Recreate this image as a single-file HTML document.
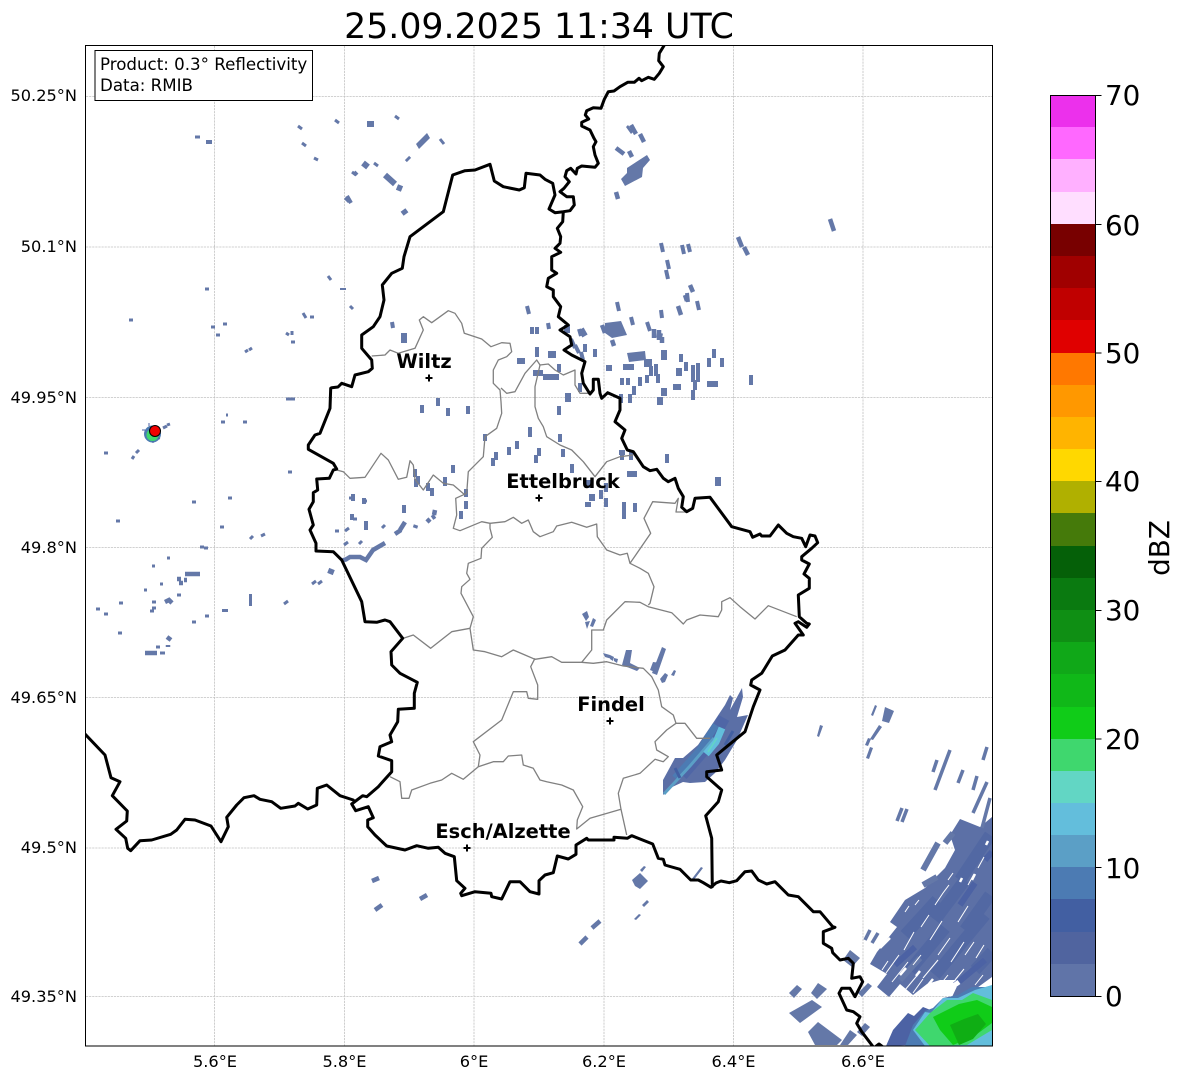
<!DOCTYPE html>
<html><head><meta charset="utf-8"><style>
html,body{margin:0;padding:0;background:#fff}
svg{display:block}
text{font-family:"DejaVu Sans","Liberation Sans",sans-serif;fill:#000}
</style></head><body>
<svg width="1184" height="1081" viewBox="0 0 1184 1081" xmlns="http://www.w3.org/2000/svg">
<text x="539" y="38" font-size="34.72" text-anchor="middle">25.09.2025 11:34 UTC</text>
<defs><clipPath id="c"><rect x="85.5" y="45.5" width="906.5" height="1000"/></clipPath></defs>
<g stroke="#c2c2c2" stroke-width="0.8" stroke-dasharray="2.2 0.9" fill="none">
<path d="M214.5 46V1046M344.5 46V1046M474 46V1046M604 46V1046M733.5 46V1046M863 46V1046M86 96.5H992M86 247H992M86 397.5H992M86 547.5H992M86 697.5H992M86 848H992M86 996.5H992"/>
</g>
<g clip-path="url(#c)">
<!-- radar small echoes -->
<g fill="none" stroke="#6478a8" stroke-linecap="butt">
<path stroke-width="3" d="M195 137h5M298 126l4 3M302 143l4 3M314 158l4 2M335 120l4 3M395 116l4 3M352 172l4 3M345 198l4 4M374 163l4 3M440 139l4 5M328 276l3 4M350 306l3 3M205 289h4M129 320h4M211 327h4M223 324h4M216 335h4M303 313l3 5M310 317h4M286 333l3 2M292 331v4M291 342h4M245 352l3-2M249 350l3-2M226 415h2M221 422h4M243 422h4M286 399h9M104 453h4M136 453l3-3M132 459l2-3M163 428l4-2M167 425l3-1M288 472h4M192 502h4M228 498h4M116 521h4M220 527h4M250 539l3-3M261 536l4-2M200 547h4M204 548h4M335 531h4M345 531l4-3M349 498h6M362 501h5M350 517h4M353 519h4M382 528l3-3M344 545l4-3M359 544l3-3M312 584l4-3M318 584l4-3M284 604l4-3M205 616h4M192 622h4M167 558h3M152 566h3M160 584h3M144 590h3M177 595h4M152 602h4M152 608h4M150 611h4M119 603h4M96 609h4M104 614h4M118 633h4M156 647h4M160 653h5"/>
<path stroke-width="4" d="M527 306l2 8M532 327v7M537 327v7M537 347v10M392 322l1 6M548 323l1 6M559 364v8M622 378v7M628 378v7M640 377v9M647 375v8M634 386v9M630 394v9M621 394v9M658 374v9M646 359v8M650 359v8M656 364v12M651 366v10M617 302l2 9M661 243l2 9M682 245l2 9M688 244l2 8M667 260l2 9M666 270l2 9M687 293l1 9M697 301l2 9M661 310l1 8M631 317l2 8M647 322l3 9M579 329l2 7M571 339l4 9M575 345l4 8M585 344v8M581 352l2 8M595 349v8M550 351v7M554 351v7M681 354v8M686 362v9M693 365v10M698 363v10M693 372v10M698 372v10M695 380v10M693 390v10M709 358v9M714 349v9M722 358v9M751 375v10M559 406v9M560 434v8M422 405v8M438 398v8M448 408v8M468 406v8M530 427v10M485 434v7M580 383v9M563 449v8M572 464v9M622 452v8M631 452v8M667 454v9M606 483v9M601 490v9M606 498v9M624 502v9M624 510v9M635 503v9M493 458v8M496 452v8M509 447v8M517 441v8M536 455v8M539 448v8M404 505v8M353 494v7M364 498v6M352 514v6M366 521v9M415 469v8M418 476v8M416 479v8M432 488v8M428 483v8M445 477v9M453 465v8M466 489v8M466 501v8M461 511v8M347 196l4 7M206 142h6M354 172l3 3"/>
<path stroke-width="6" d="M404 333v10M517 361h8M533 373h10M543 377h6M567 325v8M606 368h6M623 367h11M673 387h8M664 388v8M660 397v8M679 368v8M707 384h11M718 477v9M627 474h10M588 480v8M592 494v7M588 502v5M568 393v9M547 377h12M581 329l4 7M660 333l-1 5M664 350v10M367 124h7M407 158l2 2M363 163l5 4M385 175l10 9M397 187l5 2M403 210l3 4M343 288v2M622 450v5M330 574l2-5M225 609v3M249 597h3M249 603h3"/>
<path stroke-width="4.500" d="M345 560l5-3h10l6 3 7-10 12-7M341 561l6-2M400 530l5-8M395 534l6-4M415 528l1-3M432 518l3-2M427 522l3-3M435 510l-1 5M185 574h15M177 579h4M184 580h3M179 583h4M165 602l4-2 3 3M167 637l4 3M145 653h12M168 645v2M629 151l3 6M624 154l-8-6M631 125l5 9M640 134l4 8M616 192l2 7M830 219l4 12M738 237l4 10M744 247l4 8M690 285l3 7M685 295l2 6M678 306l3 9M602 325l3 8M612 340l2 6M654 329v9M659 330v10M662 337v6M372 881l7-3M420 899l7-4M375 910l7-5M580 944l7-7M592 928l8-7"/>
</g>
<g fill="#6478a8" stroke="none">
<path d="M416 144l11-11 3 5-11 11zM627 168l20-13 3 5-7 8-1 9-17 9-4-7 6-6zM605 323l16-2 6 14-15 3-7-5zM627 353l18-2 1 9-17 2zM653 662l8 1-6 9-5-2zM626 650h6l-2 13 10 5-3 3-15-6zM582 614l5-3 2 6-3 4zM585 622l5-1-3 8zM662 647l4 2-9 26-5-2z M628 125l5 7-2 2-5-7zM603 653l7 2 2 4-7-2zM610 655l4 2-1 4-3-2zM614 658l4 1-1 4-3-2zM593 618l3 2-3 7-3-1zM660 679l5-6 3 2-3 7-3 1zM671 675l3-5 2 1-2 5zM885 707l9 4-5 12-7-2zM820 725l3 1-4 11-2-1zM875 705l2 1-4 10-2-1zM879 725l3 2-9 13-3-1zM868 738l3 1-3 7-3-1zM870 747l3 1-4 11-3-1zM632 880l8-7 8 8-8 8-5-3zM640 870l4-4 2 1-4 5zM642 905l5-5 2 2-5 5zM634 919l5-5 2 1-5 5zM691 880l10-13 2 1-10 13z"/>
<path d="M850 950l10 8-8 9-9-7zM797 985l5 4-8 9-5-5zM818 983l9 6-10 10-6-6zM812 1000l10 7-22 16-11-10zM818 1022l24 18-5 5h-22l-7-13zM850 1030l7 5-9 10h-8zM865 1023l5 4-8 9-5-4zM868 983l4 3-10 11-4-4z"/>
</g>
<!-- convective cell NE of Remich -->
<path fill="#5b6fa6" d="M663 795v-15l12-22h8l15-13 15-22 12-18 5-10 3 3-3 12 12-22 1 9-6 20 11-2-11 25-12 20-10 13-10 9-15 1-7-1-13 6z"/>
<g fill="none">
<path stroke="#4f66a6" stroke-width="12" d="M682 775l28-32 14-25"/>
<path stroke="#4c7bb3" stroke-width="7" d="M675 778l25-28 16-25"/>
<path stroke="#5b9fc6" stroke-width="3" d="M664 794l26-28 24-28"/>
<path stroke="#63bedc" stroke-width="7" d="M706 754l10-12 6-14"/>
<path stroke="#62d6c4" stroke-width="1.500" d="M708 752l9-14"/>
<path stroke="#425fa2" stroke-width="3" d="M675 768l5 10M725 745l8-14"/>
</g>
<!-- large SE echo -->
<path fill="#5c70a6" d="M992 817l-12 10-20-8-10 16 5 15-10 18-20 20-20 12-15 22 7 5-20 25-7 12 17 10-10 13 12 10 11-13 13 11 14-11 13-4h20l-8 17 18-4 22-16z"/>
<g fill="none" stroke-linecap="butt">
<path stroke="#5268a3" stroke-width="12" d="M905 935l32-35M935 920l30-40M965 930l25-35M910 970l35-42M935 975l50-60M975 970l17-18M960 880l30-45"/>
<path stroke="#4c62a4" stroke-width="6" d="M955 985l30-25M895 965l20-18M960 905l15-22M985 860l7-8"/>
<g stroke="#6478a8" stroke-width="3.500">
<path d="M950 750l-15 40M937 760l-4 12M963 770l-5 13M987 747l-4 13M977 776l-4 14M987 782l-14 31M990 798l-8 30M902 808l-5 13M907 809l-5 13M870 930l-5 10M878 933l-6 10"/>
<path stroke-width="6" d="M938 843l-15 27M937 877l-14 8M953 833l-8 10M900 980l20-22"/>
</g>
<g stroke="#fff" stroke-width="1">
<path d="M886 973l13-18M892 982l16-20M905 990l15-18M913 993l10-14M923 978l15-18M930 940l12-19M904 950l10-18M913 965l8-10M921 927l8-12M938 955l12-17M951 962l13-20M965 955l9-13M976 958l8-13M958 922l10-16M935 905l8-12M943 893l6-8M968 885l6-11M978 868l6-11M948 880l5-7M905 912l4-6M899 905l3-5M915 905l4-5M882 970l6-9M940 985l8-10M955 980l9-11M975 985l8-10"/>
<path stroke-width="2.500" d="M880 948l10-10M900 975l6-7M916 976l4-5M928 985l5-6M972 880l3-6M960 882l2-4M986 845l2-4"/>
<path stroke-width="5" d="M945 992l14-10"/>
</g>
</g>
<!-- bottom right cell -->
<path fill="#4c62a4" d="M886 1046l7-16 15-17 6 3 9-9 10 4 10-12 10 1 16-8 29 5v45z"/>
<path fill="#4c7bb3" d="M905 1046l8-21 12-14 8-3 10-10 15-3 14-8 20 0v59z"/>
<path fill="#63bedc" d="M913 1030l12-18 6 1 12-15 15 0 17-8 17-5v61h-67z"/>
<path fill="#3fd76e" d="M915 1030l15-17 17-13 15 0 11-7 19 7v30l-25 15-37 1z"/>
<path fill="#10cc18" d="M933 1017l20-10 6-3 18-4 15 7v16l-19 14-20 8-13-15z"/>
<path fill="#0fae14" d="M950 1025l14-6 14-5 8 10-13 15-14 6z"/>
<!-- canton boundaries -->
<g fill="none" stroke="#808080" stroke-width="1.300" stroke-linejoin="round">
<path d="M371.700 356L385 355L390 350L398.300 353.300L415 348.300L423.300 330L419.300 320L423.300 316.700L431.700 322.700L448.300 310.700L455 313.300L461.700 323.300L464.300 333.300L481.700 339L491 346.700L501.700 342.700L510 343.300L511.700 351.700L506.700 356.700L498.300 360L493.300 370L493.300 383.300L500 390L501 401.700L501.700 413.300L496.700 428.300L485 436.700L483.300 456.700L468.300 471.700L466.700 493.300L455.700 498.300L456.700 515L453.300 528.300L460 530.700L481.700 521.700L490 523.300L505 521.700L513.300 517.300L521.700 523.300L528.300 520L533.300 531.700L540 536.700L553.300 531.700L556.700 526L571.700 522.300L586.700 527.300L596.700 524L597.300 536.700L606.700 550L620 555L627.300 553.300L630 563.300L640 568.300L648.300 573.300L654 586.700L650 603.300L648.300 605"/>
<path d="M490 523.300L490 528.300L492.300 537.300L481.700 548.300L481 558.300L468.300 563.300L466.700 573.300L470 579.300L461.700 586.700L461 593.300L473.300 616.700L470 628.300L473.300 650L485 651.700L501.700 656.700L513.300 650L525 655L535 659.300L551.700 656.700L561.700 662.300L581.700 662.300L593.300 663.300L606.700 661.700L623.300 666L643.300 668.300L651.700 676.700L658.300 690L661.700 706.700L673.300 715L676 723.300L685 723.300L696.700 738.300L710 738.300"/>
<path d="M470 628.300L451.700 631.700L430.700 648.300L413.300 635L403.300 638.300"/>
<path d="M336.700 470L343.300 471.700L350 478.300L365 477.300L381 453.300L388.300 460L398.300 479.300L406.700 477.300L410 460.700L413.300 465L415 479.300L423.300 490L433.300 475L443.300 483.300L453.300 485L465 495"/>
<path d="M501 388L506.700 393.300L515 391.700L525 373.300L536.700 360L540 365L548.300 364L555 370L563.300 375L575 370L575 385L580 393.300L590 393.300"/>
<path d="M540 365L535 386.700L535 406.700L538.300 418.300L543.300 426.700L546.700 436.700L560 445L571.700 450L583.300 461.700L595 476.700L606.700 461.700L620 456.700L633.300 455"/>
<path d="M630 563.300L650.700 533.300L644 518.300L652.700 501.700L675 503.300L678.300 498.300L676 512L686 512"/>
<path d="M581.700 662.300L591.700 650L591.700 630L603.300 630L606.700 620L625 601.700L640 602.300L648.300 606.700L671.700 612.700L683.300 624L686.700 620L700 615L718.300 616.700L721.700 610L721.700 601.700L730 597.700L740 606.700L755 619L768.300 605.700L796.700 616.700"/>
<path d="M676 723.300L666.700 730L655 741.700L656.700 750L668.300 756.700L663.300 761.700L655 759.300L640 773.300L623.300 778.300L618.300 793.300L621 809.300L626.700 835M621 809.300L590 818.300L576.700 829L577.300 820L582.700 806.700L573.300 790L561.700 785L546.700 781.700L540 780L533.300 768.300L523.300 765L521.700 755L508.300 756L503.300 761.700L493.300 761.700L478.300 766.700L463.300 779.300L451.700 773.300L441.700 780L430 783.300L411.700 790L409 798.300L401.700 798.300L400 781.700L390 776.700"/>
<path d="M478.300 766.700L480 755L473.300 741.700L501.700 720L513.300 691.700L526.700 691.700L528.300 698.300L537.700 699.300L537.700 685L530.700 666.700L535 658.300"/>
</g>
<!-- borders -->
<g fill="none" stroke="#000" stroke-width="3" stroke-linejoin="round" stroke-linecap="round">
<path d="M665 44L659.300 53.300L658.700 60.700L663.300 66.700L659.300 73.300L654.300 79.300L648.300 77.300L641.700 80.700L639 78.300L634.300 82.300L627.700 82.300L620 86.700L614 91L608.300 91.700L604.300 99.300L601 108.300L593.300 107.700L586.700 110.700L585.300 115L588.700 119L581.700 122.300L581.700 126L590 130L594 138.300L596 141.700L593.300 146.700L595 155L598.300 163.300L595 167.300L581.700 166L577.300 168.300L576 174L570.700 168.300L566.700 170.700L565 176.700L569.300 181.700L564 188.300L560 191.700L566.700 196.700L573.300 196.700L574.300 205L570 210.700L563.300 211.700L555 212.700L549 209L555 195L552.700 183.300L545 179.300L540 175L526 173.300L524.300 187.700L519.300 190L503.300 186.700L494.300 181L490 164.300L475 170L465 170.700L452.700 175L443.300 211.700L410 236.700L404 256.700L402.300 268.300L391.700 273.300L382.300 285L384 300L380 316.700L373.300 326.700L361.700 335L361.700 348.300L371.700 360L372.300 368.300L368.300 371.700L355 375L351.700 386.700L341.700 383.300L338 387L331.700 387.700L330.700 388.300L330 408.300L320 433.300L315 435L308.300 445L308.300 449.300L333.300 463.300L336.700 469L333.300 470L329.300 478.300L316.700 479L317.700 490L313.300 492.700L313.300 501.700L309 509.300L313.300 525L310 530L316 543.300L316 551L333.300 551.700L341.700 560L361.700 601.700L365 621.700L376.700 622.300L385 620L390 621.700L402.700 638.300L391 651.700L391.700 665L400 673.300L417.300 682.300L414.300 693.300L414.300 708.300L398.300 709.300L397.700 721.700L390 735L391.700 741.700L380 746.700L378.300 756L391.700 760.700L391.700 771.700L378.300 786.700L366.700 796.700L362.700 795.700L351.700 804L355.700 810.700L368.300 806.700L373.300 817.700L367.700 820L367.700 826.700L375 835L386.700 846L405 850L416.700 845.700L428.300 848.300L438.300 847.300L445 853.300L454.300 856.700L456.700 880.700L465 888.300L460.700 893.300L461.700 895.700L475 891.700L491 893.300L491.700 896.700L501.700 899L510 881.700L520 881.700L530 891.700L539 894L539 880.700L545 875L553.300 872.700L557.300 856L568.300 859L576 854.300L576 845L586.700 838.300L588.300 840L614 840L614 837.300L627.300 838.300L631.700 835.700L652.700 844L658.300 858.300L663.300 859.300L665 865L668.300 866L680 869.300L690.700 880L698.300 880L703.300 882.700L711 887.300L712.300 886.700L711.700 838.300L705.700 815.700L718.300 801.700L721.700 790L706.700 776.700L706.700 771.700L721.700 770L716.700 755L726.700 746.700L745 731.700L753.300 706.700L760 690L750.700 685L751.700 680L761.700 673.300L772.300 656L785 650L798.300 635L803.300 635L795 623.300L798.300 621.700L806.700 627.300L809.300 624L806.700 623.300L799.300 616.700L798.300 595L809.300 588.300L809.300 578.300L804 574L809.300 564L801.700 560L801.700 556.700L811.700 548.300L817.700 542.700L815 536L810 535L805.700 546.700L801.700 538.300L793.300 536.700L786.700 533.300L778.300 525L770 536L761.700 536L760 534L752.700 537.300L750 531.700L731.700 526.700L710 497.300L695 498.300L692.700 508.300L686.700 511.700L681.700 507.300L683.300 496.700L678.300 488.300L675 478.300L668.300 481.700L663.300 478.300L656.700 469.300L650 470.700L643.300 466.700L633.300 451.700L627.300 450L621.700 438.300L625 430L615 421.700L620 410L620 398.300L607.700 392.700L601.700 398.300L600 393.300L598.300 379.300L593.300 379.300L593.300 390L590 394L583.300 383.300L581.700 373.300L585 361.700L571.700 355L564 350L571.700 345L570 336.700L560 330L568.300 325L558.300 316.700L560.700 306.700L553.300 296.700L553.300 290L546.700 286.700L548.300 278.300L556.700 273.300L551.700 270L551.700 256.700L560.700 252.300L555 248.300L560 243.300L560.700 236.700L557.300 228.300L562.700 221.700L563.300 211.700"/>
<path d="M711.300 887L716 883L721 881L729.300 882.700L736.700 880.700L745 871.700L751.700 871L758.300 880L766.700 884L775 881.700L788.300 895L798.300 896.700L813.300 911.700L820 911.700L832.700 926.700L835 927.300L823.300 931.700L823.300 943.300L831.700 948.300L832.700 952.700L840 960L848.300 958.300L853.300 963.300L851.700 978.300L860 976.700L862.700 981.700L855 996.700L850 988.300L841.700 988.300L839 993.300L846.700 1010L853.300 1011.700L860 1016.700L856.700 1023.300L861.700 1031.700L873.300 1047M875 1047l4-3 4 3"/>
<path d="M84 733L105 755L111 777.700L120 781.700L112.300 795.700L127.300 811L126.700 821L116 829.300L125.700 838.300L127.700 848.300L130.700 850.700L140 840.700L151.700 840L170.700 834.300L176.700 830L185 819.300L195 820L211 826L221 841.700L228.300 826.700L226.700 817.300L236.700 805L244 797.700L254 795.700L260 799.300L271.700 801.700L280.700 808.300L295 806L298.300 803.300L307.700 809L316.700 805L317.300 788.300L326.700 785L340 795.700L353.300 800"/>
</g>
</g>
<!-- radar site -->
<circle cx="152.500" cy="434" r="8.500" fill="#4c7bb3"/>
<circle cx="152.500" cy="435" r="6" fill="#3fd76e"/>
<circle cx="155" cy="431" r="5.500" fill="#f00000" stroke="#000" stroke-width="1"/>
<path stroke="#4c62a4" stroke-width="1" fill="none" d="M142 430h3M149 423v3M153 443v-2M160 439l-2-1"/>
<!-- city markers -->
<g fill="none" stroke="#000" stroke-width="2">
<path d="M425.500 378h7M429 374.500v7M535.500 498h7M539 494.500v7M606.500 721h7M610 717.500v7M463.500 848h7M467 844.500v7"/>
</g>
<g font-size="19.440" font-weight="700" text-anchor="middle">
<text x="424" y="368">Wiltz</text>
<text x="563" y="488">Ettelbruck</text>
<text x="611" y="711">Findel</text>
<text x="503" y="838">Esch/Alzette</text>
</g>
<rect x="85.500" y="45.500" width="907" height="1000.500" fill="none" stroke="#000" stroke-width="1"/>
<rect x="95" y="50.500" width="217.500" height="50" fill="#fff" stroke="#000" stroke-width="1"/>
<text x="100" y="70" font-size="16.670">Product: 0.3° Reflectivity</text>
<text x="100" y="91" font-size="16.670">Data: RMIB</text>
<g font-size="16.200" text-anchor="end">
<text x="77" y="101">50.25°N</text>
<text x="77" y="252">50.1°N</text>
<text x="77" y="403">49.95°N</text>
<text x="77" y="553">49.8°N</text>
<text x="77" y="703">49.65°N</text>
<text x="77" y="853">49.5°N</text>
<text x="77" y="1002">49.35°N</text>
</g>
<g font-size="16.200" text-anchor="middle">
<text x="215" y="1067">5.6°E</text>
<text x="344.500" y="1067">5.8°E</text>
<text x="474" y="1067">6°E</text>
<text x="604" y="1067">6.2°E</text>
<text x="733.500" y="1067">6.4°E</text>
<text x="863" y="1067">6.6°E</text>
</g>
<!-- colorbar -->
<g shape-rendering="crispEdges">
<rect x="1050.500" y="95" width="45" height="33" fill="#ec30ec"/>
<rect x="1050.500" y="127" width="45" height="33" fill="#ff68ff"/>
<rect x="1050.500" y="159" width="45" height="33" fill="#ffb0ff"/>
<rect x="1050.500" y="192" width="45" height="33" fill="#ffdeff"/>
<rect x="1050.500" y="224" width="45" height="33" fill="#780000"/>
<rect x="1050.500" y="256" width="45" height="33" fill="#a00000"/>
<rect x="1050.500" y="288" width="45" height="33" fill="#c00000"/>
<rect x="1050.500" y="320" width="45" height="33" fill="#e00000"/>
<rect x="1050.500" y="353" width="45" height="33" fill="#ff7800"/>
<rect x="1050.500" y="385" width="45" height="33" fill="#ff9800"/>
<rect x="1050.500" y="417" width="45" height="33" fill="#ffb400"/>
<rect x="1050.500" y="449" width="45" height="33" fill="#ffd800"/>
<rect x="1050.500" y="481" width="45" height="33" fill="#b0b000"/>
<rect x="1050.500" y="513" width="45" height="33" fill="#457a0a"/>
<rect x="1050.500" y="546" width="45" height="33" fill="#056008"/>
<rect x="1050.500" y="578" width="45" height="33" fill="#0a7a10"/>
<rect x="1050.500" y="610" width="45" height="33" fill="#0f8f14"/>
<rect x="1050.500" y="642" width="45" height="33" fill="#10a818"/>
<rect x="1050.500" y="674" width="45" height="33" fill="#10b818"/>
<rect x="1050.500" y="707" width="45" height="33" fill="#10cc18"/>
<rect x="1050.500" y="739" width="45" height="33" fill="#3fd76e"/>
<rect x="1050.500" y="771" width="45" height="33" fill="#62d6c4"/>
<rect x="1050.500" y="803" width="45" height="33" fill="#63bedc"/>
<rect x="1050.500" y="835" width="45" height="33" fill="#5b9fc6"/>
<rect x="1050.500" y="867" width="45" height="33" fill="#4c7bb3"/>
<rect x="1050.500" y="899" width="45" height="33" fill="#425fa2"/>
<rect x="1050.500" y="932" width="45" height="33" fill="#50649f"/>
<rect x="1050.500" y="964" width="45" height="32" fill="#6074a8"/>
</g>
<rect x="1050.500" y="95.500" width="45" height="901" fill="none" stroke="#000" stroke-width="1"/>
<path stroke="#000" stroke-width="1" fill="none" d="M1096 95.500h5.500M1096 224.500h5.500M1096 353h5.500M1096 481.500h5.500M1096 610.500h5.500M1096 739h5.500M1096 867.500h5.500M1096 996.500h5.500"/>
<g font-size="27.780">
<text x="1105" y="105">70</text>
<text x="1105" y="235">60</text>
<text x="1105" y="363">50</text>
<text x="1105" y="491">40</text>
<text x="1105" y="620">30</text>
<text x="1105" y="749">20</text>
<text x="1105" y="878">10</text>
<text x="1105" y="1006">0</text>
</g>
<text transform="translate(1169 548) rotate(-90)" font-size="27.780" text-anchor="middle">dBZ</text>
</svg>
</body></html>
